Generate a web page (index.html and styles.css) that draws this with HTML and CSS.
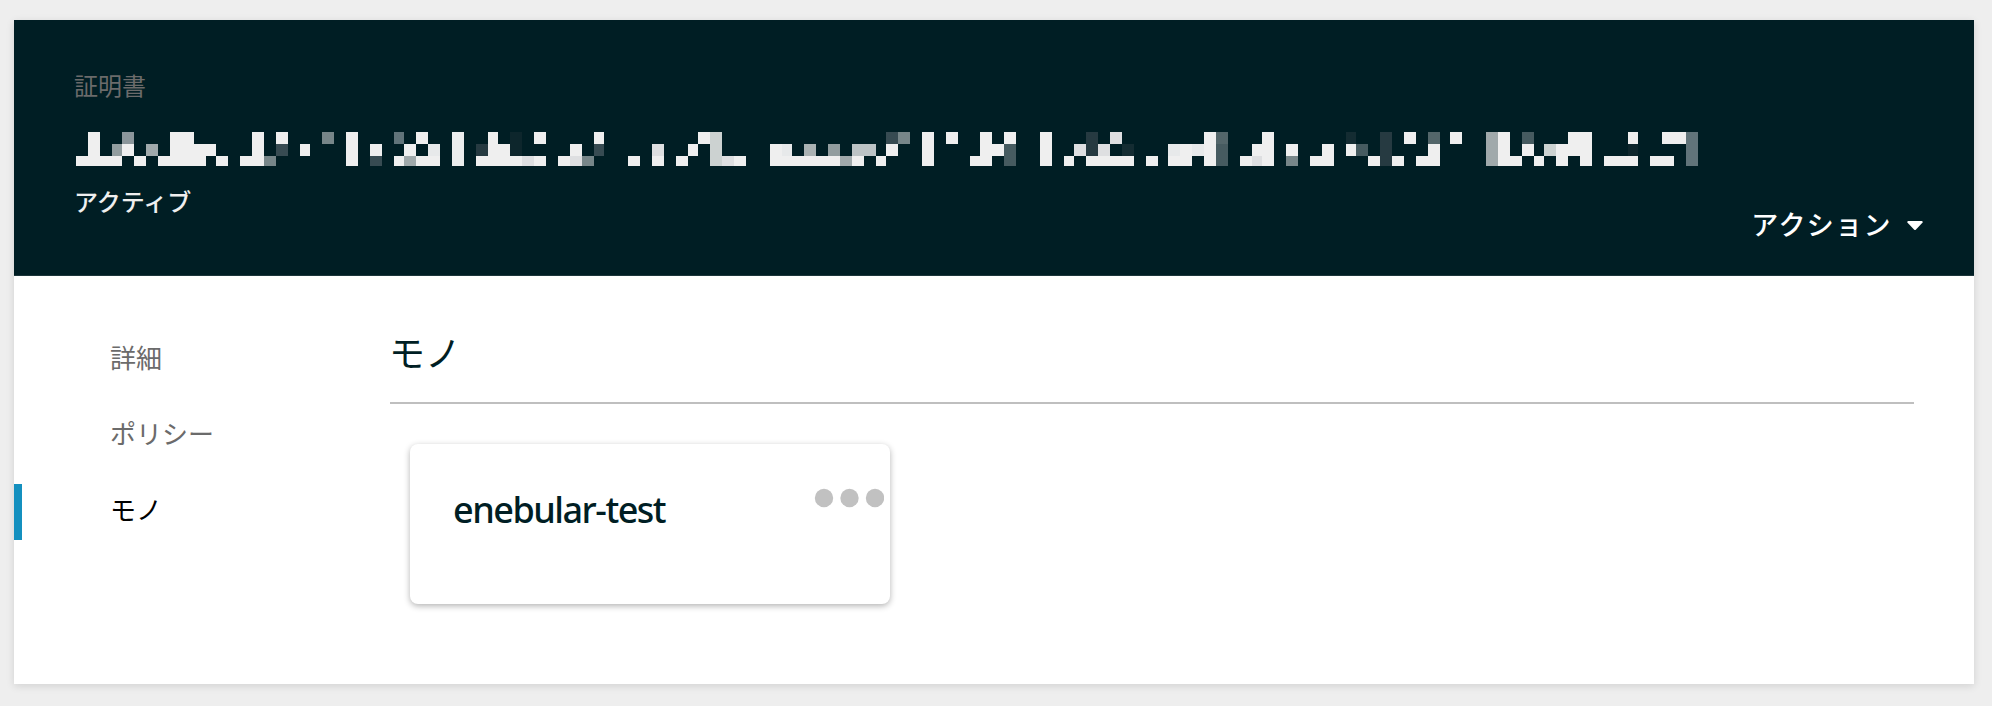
FILE: index.html
```html
<!DOCTYPE html>
<html lang="ja">
<head>
<meta charset="utf-8">
<title>証明書</title>
<link rel="stylesheet" href="styles.css">
</head>
<body>
<main class="panel">
  <header class="banner">
    <div class="banner-label">証明書</div>
    <svg class="cert-id" viewBox="0 0 1622 34" width="1622" height="34" shape-rendering="crispEdges" aria-hidden="true">
      <!-- solid cells: top row -->
      <path fill="#efefef" d="M12 0h12v12h-12zM94 0h24v12h-24zM176 0h12v12h-12zM200 0h12v12h-12zM270 0h12v12h-12zM340 0h12v12h-12zM412 0h10v12h-10zM458 0h12v12h-12zM518 0h10v12h-10zM622 0h12v12h-12zM846 0h12v12h-12zM870 0h12v12h-12zM904 0h12v12h-12zM928 0h12v12h-12zM964 0h12v12h-12zM1128 0h12v12h-12zM1186 0h12v12h-12zM1328 0h12v12h-12zM1374 0h12v12h-12zM1422 0h12v12h-12zM1492 0h24v12h-24zM1552 0h10v12h-10zM1586 0h24v12h-24z"/>
      <!-- solid cells: middle row -->
      <path fill="#efefef" d="M12 12h12v12h-12zM46 12h12v12h-12zM94 12h46v12h-46zM176 12h12v12h-12zM224 12h10v12h-10zM270 12h12v12h-12zM294 12h12v12h-12zM328 12h12v12h-12zM412 12h22v12h-22zM494 12h12v12h-12zM612 12h10v12h-10zM694 12h12v12h-12zM810 12h12v12h-12zM846 12h12v12h-12zM904 12h24v12h-24zM964 12h12v12h-12zM1104 12h12v12h-12zM1128 12h12v12h-12zM1176 12h22v12h-22zM1210 12h12v12h-12zM1246 12h12v12h-12zM1270 12h10v12h-10zM1352 12h12v12h-12zM1422 12h12v12h-12zM1446 12h12v12h-12zM1480 12h36v12h-36z"/>
      <!-- solid cells: bottom row -->
      <path fill="#efefef" d="M0 24h46v10h-46zM58 24h12v10h-12zM82 24h48v10h-48zM140 24h12v10h-12zM164 24h24v10h-24zM270 24h12v10h-12zM318 24h10v10h-10zM340 24h24v10h-24zM400 24h46v10h-46zM458 24h12v10h-12zM482 24h12v10h-12zM552 24h12v10h-12zM576 24h12v10h-12zM600 24h12v10h-12zM658 24h12v10h-12zM694 24h70v10h-70zM776 24h12v10h-12zM800 24h10v10h-10zM846 24h12v10h-12zM894 24h22v10h-22zM964 24h12v10h-12zM988 24h10v10h-10zM1010 24h48v10h-48zM1070 24h12v10h-12zM1092 24h24v10h-24zM1128 24h12v10h-12zM1164 24h12v10h-12zM1186 24h12v10h-12zM1234 24h24v10h-24zM1292 24h12v10h-12zM1316 24h12v10h-12zM1340 24h24v10h-24zM1422 24h24v10h-24zM1458 24h10v10h-10zM1480 24h12v10h-12zM1504 24h12v10h-12zM1528 24h34v10h-34zM1574 24h24v10h-24z"/>
      <!-- near-white cells -->
      <path fill="#e7e9ea" d="M352 12h12v12h-12zM706 12h10v12h-10zM1092 12h12v12h-12zM1116 12h12v12h-12z"/>
      <path fill="#ebeded" d="M376 0h12v34h-12z"/>
      <path fill="#dedfe1" d="M446 24h12v10h-12zM494 24h12v10h-12zM576 12h12v12h-12zM646 24h12v10h-12zM998 12h12v12h-12zM1022 12h12v12h-12zM1034 0h12v12h-12zM1176 24h10v10h-10z"/>
      <path fill="#ccd2d1" d="M634 0h12v34h-12zM1468 12h12v12h-12z"/>
      <path fill="#bcc3c5" d="M776 12h24v12h-24z"/>
      <!-- mid greys -->
      <path fill="#a0a9ab" d="M70 12h12v12h-12zM328 24h12v10h-12zM764 24h12v10h-12zM1410 0h12v34h-12z"/>
      <path fill="#aab2b3" d="M728 12h12v12h-12z"/>
      <path fill="#929d9f" d="M36 12h10v12h-10zM752 12h12v12h-12z"/>
      <path fill="#8b969b" d="M46 0h12v12h-12z"/>
      <path fill="#778689" d="M188 24h12v10h-12zM246 0h12v12h-12zM506 24h12v10h-12zM822 0h12v12h-12zM1210 24h12v10h-12z"/>
      <path fill="#61747a" d="M318 0h10v12h-10zM1610 0h12v34h-12z"/>
      <path fill="#53666a" d="M1140 0h12v12h-12zM1352 0h12v12h-12z"/>
      <path fill="#465b60" d="M928 12h12v22h-12zM1140 12h12v22h-12zM1280 12h12v12h-12zM1446 0h12v12h-12z"/>
      <!-- dark cells -->
      <path fill="#374b52" d="M200 12h12v12h-12zM294 24h12v10h-12zM518 12h10v12h-10zM810 0h12v12h-12z"/>
      <path fill="#263a41" d="M400 12h12v12h-12zM1010 0h12v24h-12zM1304 0h12v34h-12z"/>
      <path fill="#142c32" d="M1046 12h12v12h-12zM1270 0h10v12h-10z"/>
      <path fill="#0d262c" d="M434 0h12v24h-12zM1552 12h10v12h-10z"/>
    </svg>
    <div class="banner-status">アクティブ</div>
    <div class="banner-actions">
      <span class="actions-text">アクション</span>
      <svg class="caret" viewBox="0 0 16 10" width="16" height="10"><path d="M1.2 0h13.6q1.600.600.600 1.800L9 8.500q-1 1-2 0L.6 1.800Q-.4.600 1.200 0z" fill="#fff"/></svg>
    </div>
  </header>
  <div class="content">
    <nav class="side-nav">
      <a class="nav-item">詳細</a>
      <a class="nav-item">ポリシー</a>
      <a class="nav-item nav-item-active">モノ</a>
    </nav>
    <section class="things">
      <h2 class="things-title">モノ</h2>
      <article class="thing-card">
        <span class="thing-name">enebular-test</span>
        <svg class="more" viewBox="0 0 70 20" width="70" height="20"><g fill="#c1c1c1"><circle cx="10" cy="10" r="9.200"/><circle cx="35.500" cy="10" r="9.200"/><circle cx="61" cy="10" r="9.200"/></g></svg>
      </article>
    </section>
  </div>
</main>
</body>
</html>
```
FILE: styles.css
```css
* { box-sizing: border-box; }

body {
  margin: 0;
  height: 706px;
  padding: 20px 18px 22px 14px;
  background: #eee;
  font-family: "Noto Sans CJK JP", sans-serif;
  overflow: hidden;
}

.panel {
  height: 664px;
  background: #fff;
  box-shadow: 0 2px 8px rgba(0, 0, 0, .12);
}

.banner {
  display: flex;
  flex-direction: column;
  align-items: flex-start;
  height: 256px;
  padding: 47px 51px 0 60px;
  background: #001e24;
  border-bottom: 1px solid #1c363b;
}

.banner-label {
  height: 36px;
  line-height: 36px;
  font-size: 24px;
  color: #6b6b6b;
}

.cert-id {
  display: block;
  margin: 29px 0 0 2px;
}

.banner-status {
  height: 36px;
  margin-top: 17px;
  line-height: 36px;
  font-size: 24px;
  font-weight: 500;
  color: #efefef;
}

.banner-actions {
  display: flex;
  align-items: flex-start;
  align-self: flex-end;
  height: 40px;
  margin-top: -14px;
}

.actions-text {
  font-size: 27px;
  font-weight: 500;
  line-height: 38px;
  letter-spacing: 1.4px;
  color: #fff;
  margin-right: 15px;
}

.caret {
  display: block;
  margin-top: 16px;
}

.content { display: flex; }

.side-nav {
  display: flex;
  flex-direction: column;
  gap: 20px;
  width: 376px;
  padding-top: 56px;
}

.nav-item {
  height: 56px;
  padding-left: 88px;
  border-left: 8px solid transparent;
  font-size: 26px;
  line-height: 50px;
  color: #6b6b6b;
}

.nav-item-active {
  border-left-color: #1490bf;
  color: #000;
}

.things { width: 1524px; }

.things-title {
  height: 128px;
  margin: 0;
  padding-top: 48px;
  border-bottom: 2px solid #bfbfbf;
  font-size: 36px;
  font-weight: 400;
  line-height: 54px;
  text-indent: -1px;
  color: #001e24;
}

.thing-card {
  display: flex;
  justify-content: space-between;
  align-items: flex-start;
  width: 480px;
  height: 160px;
  margin: 40px 0 0 20px;
  padding: 44px 6px 0 43px;
  border-radius: 8px;
  background: #fff;
  box-shadow: 0 2px 6px rgba(0, 0, 0, .3);
}

.thing-name {
  font-family: "Noto Sans", sans-serif;
  font-size: 36px;
  font-weight: 500;
  line-height: 44px;
  letter-spacing: -1.5px;
  color: #001e24;
}

.more { display: block; }
```
